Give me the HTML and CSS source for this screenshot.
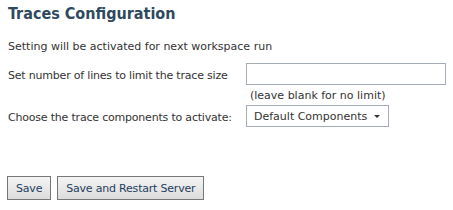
FILE: index.html
```html
<!DOCTYPE html>
<html lang="en">

<head>
    <meta charset="UTF-8">
    <title>Traces Configuration</title>
    <link rel="stylesheet" href="styles.css">
</head>

<body>
    <h2 class="title">Traces Configuration</h2>
    <p class="note">Setting will be activated for next workspace run</p>

    <div class="form">
        <label class="label" for="lines">Set number of lines to limit the trace size</label>
        <div class="field">
            <input id="lines" class="text-input" type="text">
            <span class="hint">(leave blank for no limit)</span>
        </div>

        <label class="label">Choose the trace components to activate:</label>
        <div class="field">
            <div class="dropdown">
                <span>Default Components</span>
                <span class="caret"></span>
            </div>
        </div>
    </div>

    <div class="buttons">
        <button class="btn">Save</button>
        <button class="btn">Save and Restart Server</button>
    </div>
</body>

</html>
```

FILE: styles.css
```css
/* page */
body {
    margin: 0;
    padding: 0 8px;
    font-family: "DejaVu Sans", Tahoma, sans-serif;
    font-size: 11px;
    color: #333;
    background: #fff;
}

.title {
    margin: 0;
    padding-top: 4px;
    font-family: "DejaVu Sans Condensed", "DejaVu Sans", sans-serif;
    font-size: 16px;
    font-weight: bold;
    color: #2f4a5f;
}

.note {
    margin: 17px 0 0;
}

/* form rows */
.form {
    display: grid;
    grid-template-columns: 238px 200px;
    align-items: start;
    margin-top: 10px;
}

.label {
    padding-top: 6px;
    letter-spacing: -0.2px;
}

.field {
    display: flex;
    flex-direction: column;
}

.text-input {
    box-sizing: border-box;
    width: 200px;
    height: 22px;
    margin: 0;
    border: 1px solid #a5acb5;
    font: inherit;
}

.hint {
    padding: 4px 0 3px 4px;
}

.dropdown {
    box-sizing: border-box;
    width: 143px;
    height: 22px;
    border: 1px solid #a5acb5;
    padding: 0 8px 0 7px;
    display: flex;
    align-items: center;
    justify-content: space-between;
}

.caret {
    width: 0;
    height: 0;
    border-left: 3px solid transparent;
    border-right: 3px solid transparent;
    border-top: 3px solid #333;
}

/* buttons */
.buttons {
    display: flex;
    gap: 6px;
    margin-top: 49px;
    margin-left: -1px;
}

.btn {
    height: 24px;
    padding: 0 8px;
    font: inherit;
    letter-spacing: -0.2px;
    color: #1f3f5f;
    background: linear-gradient(#f4f4f4, #dcdcdc);
    border: 1px solid #777;
    border-radius: 0;
}
```
